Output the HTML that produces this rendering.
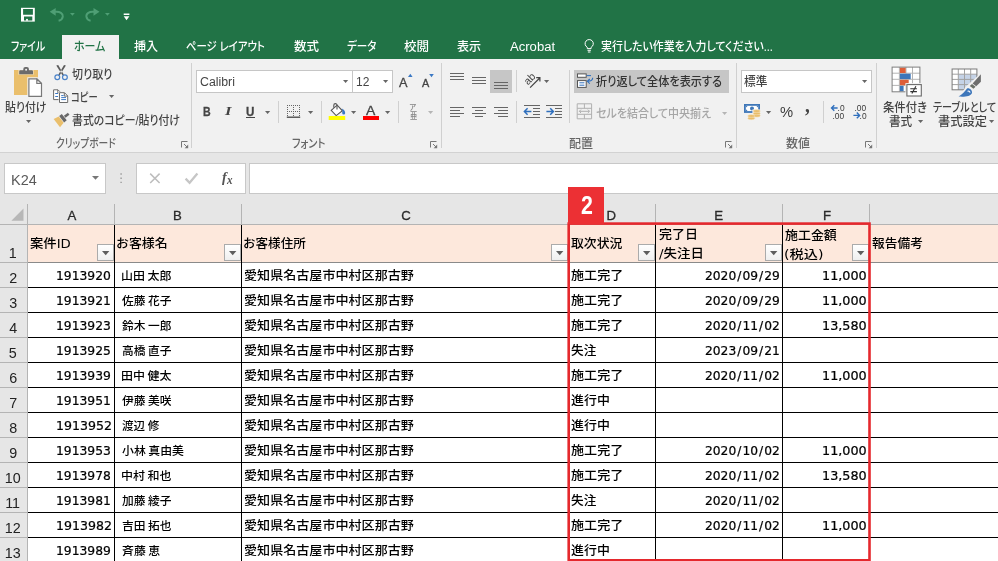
<!DOCTYPE html>
<html lang="ja">
<head>
<meta charset="utf-8">
<title>Excel</title>
<style>
html,body{margin:0;padding:0}
body{width:998px;height:561px;overflow:hidden;position:relative;background:#e6e6e6;
 font-family:"Liberation Sans","Noto Sans CJK JP",sans-serif;font-size:12px;color:#444}
div,span,svg,i,b,u{position:absolute;box-sizing:border-box}
.sec{left:0;top:0;width:998px}
.t{display:block;white-space:nowrap;line-height:20px;height:20px;transform-origin:0 0;
 font-feature-settings:"palt";font-style:normal;font-weight:400}
.t i{position:static;font-style:normal}
.ui{font-family:"Liberation Sans","Noto Sans CJK JP",sans-serif;font-weight:500}
.num{font-family:"DejaVu Sans","Liberation Sans","Noto Sans CJK JP",sans-serif}
.ser{font-family:"Liberation Serif","Noto Serif CJK SC",serif}
.cell{font-feature-settings:normal}
.m{font-weight:500}
.sb{-webkit-text-stroke:.3px currentColor}
.ns{-webkit-text-stroke:.22px currentColor}
.b{font-weight:700}.it{font-style:italic}
svg{overflow:visible}
.sec{will-change:transform}
</style>
</head>
<body>
<header id="titlebar" class="sec" style="position:absolute">
<div style="left:0px;top:0px;width:998px;height:59px;background:#217346;">
</div>
<svg style="left:21px;top:7px" width="14" height="15" viewBox="21 7 14 15" >
<rect x="21" y="7.800" width="13.800" height="13.800" fill="#fff"/>
<path d="M23.100 9h9.800v5.700h-9.800zM24 16.500h8.300v4.100h-8.300z" fill="#217346"/>
<rect x="26.100" y="18.900" width="1.800" height="1.900" fill="#fff"/>
</svg>
<svg style="left:49px;top:8px" width="15" height="14" viewBox="49 8 15 14" >
<path d="M49.700 11.800l6-3.900v7.800z" fill="#4f9f75"/>
<path d="M55 11.800c5-.600 8.200 1.700 7.800 4.900-.300 2.200-1.800 3.600-4.200 4.100" fill="none" stroke="#4f9f75" stroke-width="2"/>
</svg>
<svg style="left:70.4px;top:12.9px" width="4.8" height="2.7" viewBox="70.4 12.9 4.8 2.7" >
<path d="M70.4 12.9h4.8l-2.4 2.7z" fill="#4f9f75"/>
</svg>
<svg style="left:84px;top:8px" width="16" height="14" viewBox="84 8 16 14" >
<path d="M99.500 11.800l-6-3.900v7.800z" fill="#4f9f75"/>
<path d="M94.200 11.800c-5-.600-8.200 1.700-7.800 4.900.300 2.200 1.800 3.600 4.200 4.100" fill="none" stroke="#4f9f75" stroke-width="2"/>
</svg>
<svg style="left:105px;top:12.9px" width="4.8" height="2.7" viewBox="105 12.9 4.8 2.7" >
<path d="M105 12.9h4.8l-2.4 2.7z" fill="#4f9f75"/>
</svg>
<svg style="left:123px;top:13px" width="7" height="8" viewBox="123 13 7 8" >
<path d="M123.700 13.600h5.700v1.400h-5.700zM123.700 16.200h5.700l-2.850 4z" fill="#fff"/>
</svg>
</header>
<nav id="tabs" class="sec" style="position:absolute">
<div style="left:62px;top:35px;width:57px;height:25px;background:#f1f1f1;">
</div>
<svg style="left:585px;top:39px" width="9" height="14" viewBox="585 39 9 14" >
<path d="M587.3 48.6v-1.3a4.1 4.1 0 1 1 3.8 0v1.3zM587.5 50.3h3.4M587.9 52h2.6" fill="none" stroke="#fff" stroke-width="1"/>
</svg>
<span class="t ui" style="left:10.5px;top:37.1px;font-size:12px;color:#fff;transform:scaleX(0.8214);">ファイル</span>
<span class="t ui" style="left:73.59px;top:37.1px;font-size:12px;color:#217346;transform:scaleX(0.9121);">ホーム</span>
<span class="t ui" style="left:133.7px;top:37.1px;font-size:12px;color:#fff;transform:scaleX(1.0042);">挿入</span>
<span class="t ui" style="left:186.4px;top:37.1px;font-size:12px;color:#fff;transform:scaleX(0.8648);">ページ レイアウト</span>
<span class="t ui" style="left:293.5px;top:37.1px;font-size:12px;color:#fff;transform:scaleX(1.0417);">数式</span>
<span class="t ui" style="left:346.7px;top:37.1px;font-size:12px;color:#fff;transform:scaleX(0.8758);">データ</span>
<span class="t ui" style="left:403.8px;top:37.1px;font-size:12px;color:#fff;transform:scaleX(1.0478);">校閲</span>
<span class="t ui" style="left:456.7px;top:37.1px;font-size:12px;color:#fff;transform:scaleX(1.0042);">表示</span>
<span class="t ui" style="left:510.0px;top:37.4px;font-size:12.5px;color:#fff;transform:scaleX(1.0465);">Acrobat</span>
<span class="t ui" style="left:601.0px;top:37.1px;font-size:12px;color:#fff;transform:scaleX(0.9096);">実行したい作業を入力してください...</span>
</nav>
<section id="ribbon" class="sec" style="position:absolute">
<div style="left:0px;top:59px;width:998px;height:93px;background:#f1f1f1;">
</div>
<div style="left:0px;top:152px;width:998px;height:1px;background:#d2d2d2;">
</div>
<div style="left:191px;top:63px;width:1px;height:85px;background:#d0d0d0;">
</div>
<div style="left:441px;top:63px;width:1px;height:85px;background:#d0d0d0;">
</div>
<div style="left:736px;top:63px;width:1px;height:85px;background:#d0d0d0;">
</div>
<div style="left:876px;top:63px;width:1px;height:85px;background:#d0d0d0;">
</div>
<svg style="left:180.5px;top:141px" width="8" height="8" viewBox="180.5 141 8 8" >
<path d="M181.0 147.5v-6h6" fill="none" stroke="#777" stroke-width="1"/>
<path d="M183.5 144l3.2 3.2" stroke="#777" stroke-width="1"/>
<path d="M187.7 144.6v3.6h-3.6z" fill="#777"/>
</svg>
<svg style="left:430px;top:141px" width="8" height="8" viewBox="430 141 8 8" >
<path d="M430.5 147.5v-6h6" fill="none" stroke="#777" stroke-width="1"/>
<path d="M433 144l3.2 3.2" stroke="#777" stroke-width="1"/>
<path d="M437.2 144.6v3.6h-3.6z" fill="#777"/>
</svg>
<svg style="left:725px;top:141px" width="8" height="8" viewBox="725 141 8 8" >
<path d="M725.5 147.5v-6h6" fill="none" stroke="#777" stroke-width="1"/>
<path d="M728 144l3.2 3.2" stroke="#777" stroke-width="1"/>
<path d="M732.2 144.6v3.6h-3.6z" fill="#777"/>
</svg>
<svg style="left:865px;top:141px" width="8" height="8" viewBox="865 141 8 8" >
<path d="M865.5 147.5v-6h6" fill="none" stroke="#777" stroke-width="1"/>
<path d="M868 144l3.2 3.2" stroke="#777" stroke-width="1"/>
<path d="M872.2 144.6v3.6h-3.6z" fill="#777"/>
</svg>
<svg style="left:14px;top:67px" width="29" height="31" viewBox="14 67 29 31" >
<rect x="14" y="70" width="24" height="25" fill="#eabf6c"/>
<path d="M18.300 70h15.400v4.700h-15.400z" fill="#f1f1f1" opacity=".55"/>
<path d="M23.300 70.200v-1.200a2 2 0 0 1 2-2h1.600a2 2 0 0 1 2 2v1.200h2.900a1.200 1.200 0 0 1 1.200 1.200v2.800h-13.800v-2.800a1.200 1.200 0 0 1 1.200-1.200z" fill="#6b6b6b"/>
<circle cx="26.100" cy="69.700" r="1" fill="#f1f1f1"/>
<path d="M27.300 77.300h10.300l5.400 5.400v15.300h-15.700z" fill="#f1f1f1"/>
<path d="M28.900 78.800h7.900l4.700 4.700v12.800h-12.600z" fill="#fff" stroke="#787878" stroke-width="1.200"/>
<path d="M36.800 78.800v4.700h4.700z" fill="#e4e4e4" stroke="#787878" stroke-width="1.200" stroke-linejoin="round"/>
</svg>
<svg style="left:26px;top:120.2px" width="5.2" height="3" viewBox="26 120.2 5.2 3" >
<path d="M26 120.2h5.2l-2.6 3z" fill="#666"/>
</svg>
<svg style="left:53px;top:65px" width="16" height="16" viewBox="53 65 16 16" >
<path d="M56.300 65.400l1.900-.300 5.700 9.600-1.300.800zM65.900 65.400l-1.900-.300-5.700 9.600 1.300.800z" fill="#5c5c5c"/>
<circle cx="57.300" cy="77.200" r="2.400" fill="none" stroke="#4a82c8" stroke-width="1.200"/>
<circle cx="64.900" cy="77.200" r="2.400" fill="none" stroke="#4a82c8" stroke-width="1.200"/>
</svg>
<svg style="left:53px;top:89px" width="16" height="15" viewBox="53 89 16 15" >
<path d="M53.600 89.800h4.400l2.600 2.600v7.200h-7z" fill="#fff" stroke="#6b6b6b" stroke-width="1"/>
<path d="M57.800 90v2.800h2.800" fill="none" stroke="#6b6b6b" stroke-width="1"/>
<path d="M55.200 93.500h2.800M55.200 96.500h2.800" stroke="#3b78c4" stroke-width="1"/>
<path d="M58.500 91.700h6.300l3.700 3.700v8.300h-10z" fill="#f1f1f1"/>
<path d="M59.500 92.700h5l3.200 3.200v6.600h-8.200z" fill="#fff" stroke="#6b6b6b" stroke-width="1"/>
<path d="M64.300 92.900v3.200h3.200" fill="none" stroke="#6b6b6b" stroke-width="1"/>
<path d="M61.200 95.600h2.400M61.200 97.600h4.800M61.200 99.600h4.800" stroke="#3b78c4" stroke-width="1"/>
</svg>
<svg style="left:109px;top:95px" width="5.2" height="3" viewBox="109 95 5.2 3" >
<path d="M109 95h5.2l-2.6 3z" fill="#666"/>
</svg>
<svg style="left:53px;top:112px" width="17" height="14" viewBox="53 112 17 14" >
<g transform="translate(63 118.200) rotate(-38)">
<rect x="2.200" y="-1.300" width="5" height="2.600" fill="#686868"/>
<rect x="-1.700" y="-4" width="3.300" height="8" fill="#686868"/>
<path d="M-2.300-4v8l-5.600 1.300v-10.400z" fill="#eabf6c"/>
</g>
</svg>
<div style="left:196px;top:70px;width:157px;height:23px;background:#fff;border:1px solid #c6c6c6;">
</div>
<div style="left:352px;top:70px;width:41px;height:23px;background:#fff;border:1px solid #c6c6c6;">
</div>
<svg style="left:343px;top:80px" width="5.2" height="3" viewBox="343 80 5.2 3" >
<path d="M343 80h5.2l-2.6 3z" fill="#666"/>
</svg>
<svg style="left:382.7px;top:80px" width="5.2" height="3" viewBox="382.7 80 5.2 3" >
<path d="M382.7 80h5.2l-2.6 3z" fill="#666"/>
</svg>
<svg style="left:408px;top:73px" width="5" height="4" viewBox="408 73 5 4" >
<path d="M408 77h4.600l-2.300-3.200z" fill="#3b78c4"/>
</svg>
<svg style="left:429px;top:73px" width="5" height="4" viewBox="429 73 5 4" >
<path d="M429.200 74h4.600l-2.300 3.200z" fill="#3b78c4"/>
</svg>
<div style="left:246px;top:117px;width:9px;height:1px;background:#444;">
</div>
<svg style="left:264.6px;top:111px" width="5.2" height="3" viewBox="264.6 111 5.2 3" >
<path d="M264.6 111h5.2l-2.6 3z" fill="#666"/>
</svg>
<div style="left:278px;top:101px;width:1px;height:22px;background:#d0d0d0;">
</div>
<svg style="left:286px;top:104px" width="15" height="14" viewBox="286 104 15 14" >
<path d="M287.500 105v11.500M293.500 105v11.500M299.500 105v11.500" stroke="#666" stroke-width="1" stroke-dasharray="1 1"/>
<path d="M287 105.500h13M287 111.500h13" stroke="#666" stroke-width="1" stroke-dasharray="1 1"/>
<path d="M286.800 117.200h13.400" stroke="#444" stroke-width="1.300"/>
</svg>
<svg style="left:307.8px;top:111px" width="5.2" height="3" viewBox="307.8 111 5.2 3" >
<path d="M307.8 111h5.2l-2.6 3z" fill="#666"/>
</svg>
<div style="left:321px;top:101px;width:1px;height:22px;background:#d0d0d0;">
</div>
<svg style="left:328px;top:103px" width="18" height="17" viewBox="328 103 18 17" >
<path d="M331.200 110.400l6-5.200 5.200 5.600-6.200 4.800z" fill="#fff" stroke="#555" stroke-width="1.100"/>
<path d="M337 109.400v-4.200a1.600 1.600 0 0 0-3.200 0v2.600" fill="none" stroke="#555" stroke-width="1.100"/>
<path d="M341.800 108.600c1.800.800 3.400 2.600 3.400 4.400a1.500 1.500 0 0 1-3 0c0-1.300.500-2.700-.400-4.400z" fill="#3b78c4"/>
<rect x="328.700" y="116" width="16.500" height="4" fill="#ffff00"/>
</svg>
<svg style="left:350.8px;top:111px" width="5.2" height="3" viewBox="350.8 111 5.2 3" >
<path d="M350.8 111h5.2l-2.6 3z" fill="#666"/>
</svg>
<div style="left:363px;top:116px;width:16px;height:4px;background:#ff0000;">
</div>
<svg style="left:384.7px;top:111px" width="5.2" height="3" viewBox="384.7 111 5.2 3" >
<path d="M384.7 111h5.2l-2.6 3z" fill="#666"/>
</svg>
<div style="left:398px;top:101px;width:1px;height:22px;background:#d0d0d0;">
</div>
<svg style="left:427.6px;top:111px" width="5.2" height="3" viewBox="427.6 111 5.2 3" >
<path d="M427.6 111h5.2l-2.6 3z" fill="#b5b5b5"/>
</svg>
<svg style="left:450px;top:73px" width="14" height="7" viewBox="450 73 14 7" >
<path d="M450 73.5h14M450 76.5h14M450 79.5h14" stroke="#666" stroke-width="1" fill="none"/>
</svg>
<svg style="left:472px;top:77px" width="14" height="7" viewBox="472 77 14 7" >
<path d="M472 77.5h14M472 80.5h14M472 83.5h14" stroke="#666" stroke-width="1" fill="none"/>
</svg>
<div style="left:490px;top:70px;width:22px;height:23px;background:#c6c6c6;">
</div>
<svg style="left:494px;top:82px" width="14" height="7" viewBox="494 82 14 7" >
<path d="M494 82.5h14M494 85.5h14M494 88.5h14" stroke="#666" stroke-width="1" fill="none"/>
</svg>
<div style="left:516px;top:70px;width:1px;height:22px;background:#d0d0d0;">
</div>
<svg style="left:523px;top:72px" width="18" height="16" viewBox="523 72 18 16" >
<text transform="translate(527.900 85.500) rotate(-45)" font-family='"Liberation Sans",sans-serif' font-size="10.600" fill="#444">ab</text>
<path d="M530.100 87.600l9.600-9.600M536.200 77.700h3.700v3.700" stroke="#444" stroke-width="1.200" fill="none"/>
</svg>
<svg style="left:543.8px;top:80px" width="5.2" height="3" viewBox="543.8 80 5.2 3" >
<path d="M543.8 80h5.2l-2.6 3z" fill="#666"/>
</svg>
<svg style="left:450px;top:107px" width="14" height="10" viewBox="450 107 14 10" >
<path d="M450 107.5h14M450 110.5h10M450 113.5h14M450 116.5h10" stroke="#666" stroke-width="1" fill="none"/>
</svg>
<svg style="left:472px;top:107px" width="14" height="10" viewBox="472 107 14 10" >
<path d="M472.0 107.5h14M475.0 110.5h8M472.0 113.5h14M475.0 116.5h8" stroke="#666" stroke-width="1" fill="none"/>
</svg>
<svg style="left:494px;top:107px" width="14" height="10" viewBox="494 107 14 10" >
<path d="M494 107.5h14M498 110.5h10M494 113.5h14M498 116.5h10" stroke="#666" stroke-width="1" fill="none"/>
</svg>
<div style="left:516px;top:101px;width:1px;height:22px;background:#d0d0d0;">
</div>
<svg style="left:524px;top:105px" width="16" height="13" viewBox="524 105 16 13" >
<path d="M524 105.5h16M524 117.5h16" stroke="#666" stroke-width="1" fill="none"/>
<path d="M533 108.5h7M533 111.5h7M533 114.5h7" stroke="#666" stroke-width="1" fill="none"/>
<path d="M524.400 111.500h7M527.600 108.300l-3.200 3.200 3.200 3.200" stroke="#2f6fbd" stroke-width="1.500" fill="none"/>
</svg>
<svg style="left:546px;top:105px" width="16" height="13" viewBox="546 105 16 13" >
<path d="M546 105.5h16M546 117.5h16" stroke="#666" stroke-width="1" fill="none"/>
<path d="M555 108.5h7M555 111.5h7M555 114.5h7" stroke="#666" stroke-width="1" fill="none"/>
<path d="M546.400 111.500h7M550.200 108.300l3.200 3.200-3.200 3.200" stroke="#2f6fbd" stroke-width="1.500" fill="none"/>
</svg>
<div style="left:569px;top:70px;width:1px;height:53px;background:#d0d0d0;">
</div>
<div style="left:574px;top:70px;width:155px;height:23px;background:#c6c6c6;">
</div>
<svg style="left:576px;top:73px" width="18" height="16" viewBox="576 73 18 16" >
<rect x="577.500" y="73.900" width="8.700" height="3.400" fill="#fff" stroke="#555" stroke-width="1"/>
<path d="M586.600 75.600h4.400" stroke="#2f6fbd" stroke-width="1"/>
<rect x="577.500" y="80.600" width="8.700" height="6.800" fill="#fff" stroke="#555" stroke-width="1"/>
<path d="M579.400 82.800h5M579.400 85.200h5" stroke="#2f6fbd" stroke-width="1"/>
<path d="M592.700 77.800c0 2.400-1.600 3.500-5 3.500M589.800 79l-2.500 2.300 2.500 2.300" fill="none" stroke="#2f6fbd" stroke-width="1.100"/>
</svg>
<svg style="left:576px;top:103px" width="17" height="17" viewBox="576 103 17 17" >
<path d="M577.200 103.800h14.400v15h-14.400zM577.200 108.300h14.400M577.200 114.300h14.400M584.400 103.800v4.500M584.400 114.300v4.500" fill="none" stroke="#b0b0b0" stroke-width="1"/>
<path d="M579.300 111.300h10.200M581 109.600l-1.700 1.700 1.700 1.700M587.800 109.600l1.700 1.700-1.700 1.700" fill="none" stroke="#b0b0b0" stroke-width="1"/>
</svg>
<svg style="left:722px;top:111.6px" width="5.2" height="3" viewBox="722 111.6 5.2 3" >
<path d="M722 111.6h5.2l-2.6 3z" fill="#b5b5b5"/>
</svg>
<div style="left:741px;top:70px;width:131px;height:23px;background:#fff;border:1px solid #c6c6c6;">
</div>
<svg style="left:862px;top:80.2px" width="5.2" height="3" viewBox="862 80.2 5.2 3" >
<path d="M862 80.2h5.2l-2.6 3z" fill="#666"/>
</svg>
<svg style="left:744px;top:104px" width="17" height="16" viewBox="744 104 17 16" >
<rect x="744.900" y="104.900" width="14.200" height="7.100" fill="#fff" stroke="#3f77b8" stroke-width="1.800"/>
<path d="M746 106l1.600 0-1.600 1.600zM758 106l-1.600 0 1.600 1.600zM746 110.900l1.600 0-1.600-1.600z" fill="#3f77b8"/>
<circle cx="752" cy="108.400" r="2" fill="#3f77b8"/>
<path d="M752.400 109.400h8.400v8h-4.800v3h-9.200v-5.600h5.600z" fill="#f1f1f1"/>
<ellipse cx="756.700" cy="115.7" rx="3.500" ry="1.350" fill="#e9bd6a" stroke="#f4dcae" stroke-width=".600"/>
<ellipse cx="756.700" cy="113.4" rx="3.500" ry="1.350" fill="#e9bd6a" stroke="#f4dcae" stroke-width=".600"/>
<ellipse cx="756.700" cy="111.1" rx="3.500" ry="1.350" fill="#e9bd6a" stroke="#f4dcae" stroke-width=".600"/>
<ellipse cx="751.300" cy="118.3" rx="3.500" ry="1.350" fill="#e9bd6a" stroke="#f4dcae" stroke-width=".600"/>
<ellipse cx="751.300" cy="116" rx="3.500" ry="1.350" fill="#e9bd6a" stroke="#f4dcae" stroke-width=".600"/>
</svg>
<svg style="left:766px;top:111.2px" width="5.2" height="3" viewBox="766 111.2 5.2 3" >
<path d="M766 111.2h5.2l-2.6 3z" fill="#666"/>
</svg>
<div style="left:823px;top:101px;width:1px;height:22px;background:#d0d0d0;">
</div>
<svg style="left:831px;top:104px" width="15" height="15" viewBox="831 104 15 15" >
<path d="M831.400 108h6.200M834.300 105.200l-2.800 2.800 2.800 2.800" fill="none" stroke="#2f6fbd" stroke-width="1.400"/>
<text x="837.600" y="111" font-family='"Liberation Sans",sans-serif' font-size="8.400" fill="#3a3a3a">.0</text>
<text x="832.400" y="118.600" font-family='"Liberation Sans",sans-serif' font-size="8.400" fill="#3a3a3a">.00</text>
</svg>
<svg style="left:853px;top:104px" width="15" height="15" viewBox="853 104 15 15" >
<path d="M853.400 115.400h6.200M856.800 112.600l2.800 2.800-2.800 2.800" fill="none" stroke="#2f6fbd" stroke-width="1.400"/>
<text x="854.400" y="111" font-family='"Liberation Sans",sans-serif' font-size="8.400" fill="#3a3a3a">.00</text>
<text x="859.600" y="118.600" font-family='"Liberation Sans",sans-serif' font-size="8.400" fill="#3a3a3a">.0</text>
</svg>
<svg style="left:892px;top:67px" width="31" height="30" viewBox="892 67 31 30" >
<rect x="892.100" y="67.100" width="27.800" height="24.700" fill="#fff"/>
<path d="M899.4 67.100v24.700M906 67.100v24.700M912.5 67.100v24.700M892.100 73.2h27.800M892.100 79.3h27.800M892.100 85.4h27.800" stroke="#b4b4b4" stroke-width="1" fill="none"/>
<rect x="899.900" y="67.600" width="5.800" height="5.400" fill="#de5e38"/>
<rect x="899.900" y="73.700" width="10.800" height="5.400" fill="#3d76ba"/>
<rect x="899.900" y="79.800" width="8.800" height="5.400" fill="#de5e38"/>
<rect x="899.900" y="85.900" width="3.700" height="5.400" fill="#3d76ba"/>
<rect x="892.100" y="67.100" width="27.800" height="24.700" fill="none" stroke="#7e7e7e" stroke-width="1"/>
<rect x="905.400" y="83.100" width="17.500" height="14.400" fill="#f1f1f1"/>
<rect x="906.900" y="84.600" width="14.400" height="11.400" fill="#fff" stroke="#6a6a6a" stroke-width="1.100"/>
<path d="M910.300 88.800h6.600M910.300 91.600h6.600M915.900 86.200l-4 7.400" stroke="#333" stroke-width="1.100" fill="none"/>
</svg>
<svg style="left:917.5px;top:120.4px" width="5.2" height="3" viewBox="917.5 120.4 5.2 3" >
<path d="M917.5 120.4h5.2l-2.6 3z" fill="#666"/>
</svg>
<svg style="left:952px;top:69px" width="30" height="28" viewBox="952 69 30 28" >
<rect x="952.100" y="69" width="24.800" height="20.800" fill="#fff"/>
<rect x="958.300" y="74.200" width="18.600" height="15.600" fill="#c5d3e7"/>
<path d="M958.3 69v20.800M964.5 69v20.800M970.7 69v20.800M952.100 74.2h24.800M952.100 79.4h24.800M952.100 84.6h24.800" stroke="#a2a2a2" stroke-width="1" fill="none"/>
<rect x="952.100" y="69" width="24.800" height="20.800" fill="none" stroke="#7a7a7a" stroke-width="1"/>
<path d="M982 72.200v11l-3.800 3.600v4.200h-4.600c-.600 4-5.600 7.100-16.600 6.900l-1-1.600c5-2.500 7.500-5.500 9.600-9.600z" fill="#f1f1f1"/>
<path d="M980.900 74.300v7.500l-4.700 4.400-3.600-2.800z" fill="#6e6e6e"/>
<path d="M972 84l3.600 2.800-2.200 2-3.600-2.800z" fill="#6b7068"/>
<path d="M958.600 96.600c4.400-2.600 6.400-5.400 8.400-8 2-1.100 5.500 1.400 5 4.400-1.500 3.500-7 4-13.400 3.600z" fill="#3d76ba"/>
<path d="M967 91.200a1.900 1.900 0 0 1 3.300 1.800c-.700-.200-1-.900-1.500-1.300-.500-.400-1.200-.300-1.800-.500z" fill="#fff"/>
</svg>
<svg style="left:989.3px;top:120.4px" width="5.2" height="3" viewBox="989.3 120.4 5.2 3" >
<path d="M989.3 120.4h5.2l-2.6 3z" fill="#666"/>
</svg>
<span class="t ui" style="left:56.19px;top:133.7px;font-size:12px;color:#666;transform:scaleX(0.8082);">クリップボード</span>
<span class="t ui" style="left:292.0px;top:133.7px;font-size:12px;color:#666;transform:scaleX(0.8462);">フォント</span>
<span class="t ui" style="left:569.0px;top:133.7px;font-size:12px;color:#666;">配置</span>
<span class="t ui" style="left:786.0px;top:133.7px;font-size:12px;color:#666;">数値</span>
<span class="t ui" style="left:5.0px;top:97.8px;font-size:12px;color:#444;transform:scaleX(0.9087);">貼り付け</span>
<span class="t ui" style="left:72.0px;top:65.1px;font-size:12px;color:#444;transform:scaleX(0.9209);">切り取り</span>
<span class="t ui" style="left:71.22px;top:87.7px;font-size:12px;color:#444;transform:scaleX(0.7758);">コピー</span>
<span class="t ui" style="left:72.0px;top:110.7px;font-size:12px;color:#444;transform:scaleX(0.9076);">書式のコピー/貼り付け</span>
<span class="t ui" style="left:199.5px;top:72.1px;font-size:12.5px;color:#444;transform:scaleX(0.9857);">Calibri</span>
<span class="t ui" style="left:356.0px;top:72.2px;font-size:12px;color:#444;">12</span>
<span class="t ui sb" style="left:399.4px;top:72.9px;font-size:12.2px;color:#444;transform:scaleX(1.0444);">A</span>
<span class="t ui sb" style="left:422.0px;top:74.1px;font-size:10px;color:#444;transform:scaleX(1.0857);">A</span>
<span class="t ui b sb" style="left:202.6px;top:101.9px;font-size:12.4px;color:#444;transform:scaleX(0.8556);">B</span>
<span class="t ser b it" style="left:225.2px;top:101.4px;font-size:12.6px;color:#444;transform:scaleX(1.3200);">I</span>
<span class="t ui b sb" style="left:246.2px;top:101.9px;font-size:12.4px;color:#444;transform:scaleX(0.9333);">U</span>
<span class="t ui sb" style="left:366.4px;top:101.3px;font-size:12.8px;color:#444;transform:scaleX(1.0889);">A</span>
<span class="t ui cell" style="left:409.07px;top:98.0px;font-size:8px;color:#858585;transform:scaleX(0.9286);">ア</span>
<span class="t ui cell" style="left:410.0px;top:106.4px;font-size:9.2px;color:#858585;transform:scaleX(0.7889);">亜</span>
<span class="t ui" style="left:596.0px;top:71.7px;font-size:12px;color:#333;transform:scaleX(0.9304);">折り返して全体を表示する</span>
<span class="t ui" style="left:596.0px;top:103.7px;font-size:12px;color:#a6a6a6;transform:scaleX(0.9167);">セルを結合して中央揃え</span>
<span class="t ui" style="left:744.4px;top:72.1px;font-size:12px;color:#444;transform:scaleX(0.9708);">標準</span>
<span class="t ui" style="left:780.4px;top:102.3px;font-size:15px;color:#3c3c3c;transform:scaleX(0.9846);">%</span>
<span class="t ser b" style="left:805.3px;top:94.8px;font-size:22px;color:#444;transform:scaleX(0.8800);">,</span>
<span class="t ui" style="left:883.0px;top:97.6px;font-size:12px;color:#444;transform:scaleX(0.9457);">条件付き</span>
<span class="t ui" style="left:889.0px;top:112.4px;font-size:12px;color:#444;transform:scaleX(0.9667);">書式</span>
<span class="t ui" style="left:933.0px;top:97.6px;font-size:12px;color:#444;transform:scaleX(0.8400);">テーブルとして</span>
<span class="t ui" style="left:937.6px;top:112.4px;font-size:12px;color:#444;transform:scaleX(1.0208);">書式設定</span>
</section>
<section id="formulabar" class="sec" style="position:absolute">
<div style="left:4px;top:163px;width:102px;height:31px;background:#fff;border:1px solid #c8c8c8;">
</div>
<svg style="left:92px;top:176.3px" width="7" height="3.8" viewBox="92 176.3 7 3.8" >
<path d="M92 176.3h7l-3.5 3.8z" fill="#777"/>
</svg>
<svg style="left:120px;top:173px" width="2" height="11" viewBox="120 173 2 11" >
<path d="M120.400 173.300h1.400v1.400h-1.400zM120.400 177.500h1.400v1.400h-1.400zM120.400 181.700h1.400v1.400h-1.400z" fill="#9a9a9a"/>
</svg>
<div style="left:136px;top:163px;width:110px;height:31px;background:#fff;border:1px solid #c8c8c8;">
</div>
<svg style="left:149px;top:173px" width="12" height="11" viewBox="149 173 12 11" >
<path d="M150.200 173.600l9.400 9.400M159.600 173.600l-9.400 9.400" stroke="#bdbdbd" stroke-width="1.500"/>
</svg>
<svg style="left:185px;top:173px" width="14" height="11" viewBox="185 173 14 11" >
<path d="M185.600 178.600l4 4.200 7.800-9.200" fill="none" stroke="#c6c6c6" stroke-width="2.300"/>
</svg>
<div style="left:249px;top:163px;width:760px;height:31px;background:#fff;border:1px solid #c8c8c8;">
</div>
<span class="t ui" style="left:11.01px;top:170.4px;font-size:14.6px;color:#5a5a5a;transform:scaleX(0.9920);">K24</span>
<span class="t ser b it" style="left:221.6px;top:166.5px;font-size:15px;color:#555;transform:scaleX(0.9429);">f</span>
<span class="t ser b it" style="left:227.2px;top:169.6px;font-size:11.5px;color:#555;transform:scaleX(0.9667);">x</span>
</section>
<main id="grid" class="sec" style="position:absolute">
<div style="left:0px;top:204px;width:998px;height:21px;background:#e6e6e6;">
</div>
<div style="left:0px;top:224px;width:998px;height:1px;background:#b4b4b4;">
</div>
<div style="left:27px;top:204px;width:1px;height:21px;background:#b4b4b4;">
</div>
<div style="left:114px;top:204px;width:1px;height:21px;background:#b4b4b4;">
</div>
<div style="left:241px;top:204px;width:1px;height:21px;background:#b4b4b4;">
</div>
<div style="left:568px;top:204px;width:1px;height:21px;background:#b4b4b4;">
</div>
<div style="left:655px;top:204px;width:1px;height:21px;background:#b4b4b4;">
</div>
<div style="left:782px;top:204px;width:1px;height:21px;background:#b4b4b4;">
</div>
<div style="left:869px;top:204px;width:1px;height:21px;background:#b4b4b4;">
</div>
<svg style="left:11px;top:208px" width="13" height="13" viewBox="11 208 13 13" >
<path d="M23.500 208.600v12.100h-12.100z" fill="#b7b7b7"/>
</svg>
<div style="left:0px;top:225px;width:27px;height:336px;background:#e6e6e6;">
</div>
<div style="left:27px;top:225px;width:1px;height:336px;background:#b4b4b4;">
</div>
<div style="left:0px;top:262px;width:27px;height:1px;background:#b4b4b4;">
</div>
<div style="left:0px;top:287px;width:27px;height:1px;background:#b4b4b4;">
</div>
<div style="left:0px;top:312px;width:27px;height:1px;background:#b4b4b4;">
</div>
<div style="left:0px;top:337px;width:27px;height:1px;background:#b4b4b4;">
</div>
<div style="left:0px;top:362px;width:27px;height:1px;background:#b4b4b4;">
</div>
<div style="left:0px;top:387px;width:27px;height:1px;background:#b4b4b4;">
</div>
<div style="left:0px;top:412px;width:27px;height:1px;background:#b4b4b4;">
</div>
<div style="left:0px;top:437px;width:27px;height:1px;background:#b4b4b4;">
</div>
<div style="left:0px;top:462px;width:27px;height:1px;background:#b4b4b4;">
</div>
<div style="left:0px;top:487px;width:27px;height:1px;background:#b4b4b4;">
</div>
<div style="left:0px;top:512px;width:27px;height:1px;background:#b4b4b4;">
</div>
<div style="left:0px;top:537px;width:27px;height:1px;background:#b4b4b4;">
</div>
<div style="left:0px;top:562px;width:27px;height:1px;background:#b4b4b4;">
</div>
<div style="left:28px;top:225px;width:970px;height:336px;background:#fff;">
</div>
<div style="left:28px;top:225px;width:970px;height:37px;background:#fde8dc;">
</div>
<div style="left:28px;top:262px;width:970px;height:1px;background:#8a8a8a;">
</div>
<div style="left:28px;top:287px;width:970px;height:1px;background:#000;">
</div>
<div style="left:28px;top:312px;width:970px;height:1px;background:#000;">
</div>
<div style="left:28px;top:337px;width:970px;height:1px;background:#000;">
</div>
<div style="left:28px;top:362px;width:970px;height:1px;background:#000;">
</div>
<div style="left:28px;top:387px;width:970px;height:1px;background:#000;">
</div>
<div style="left:28px;top:412px;width:970px;height:1px;background:#000;">
</div>
<div style="left:28px;top:437px;width:970px;height:1px;background:#000;">
</div>
<div style="left:28px;top:462px;width:970px;height:1px;background:#000;">
</div>
<div style="left:28px;top:487px;width:970px;height:1px;background:#000;">
</div>
<div style="left:28px;top:512px;width:970px;height:1px;background:#000;">
</div>
<div style="left:28px;top:537px;width:970px;height:1px;background:#000;">
</div>
<div style="left:28px;top:562px;width:970px;height:1px;background:#000;">
</div>
<div style="left:114px;top:225px;width:1px;height:336px;background:#000;">
</div>
<div style="left:241px;top:225px;width:1px;height:336px;background:#000;">
</div>
<div style="left:568px;top:225px;width:1px;height:336px;background:#000;">
</div>
<div style="left:655px;top:225px;width:1px;height:336px;background:#000;">
</div>
<div style="left:782px;top:225px;width:1px;height:336px;background:#000;">
</div>
<div style="left:869px;top:225px;width:1px;height:336px;background:#000;">
</div>
<div class="fb" style="left:97px;top:244px;width:17px;height:17px;border:1px solid #ababab;background:linear-gradient(#fff,#efefef)">
</div>
<svg style="left:102px;top:251px" width="8" height="4" viewBox="102 251 8 4" >
<path d="M102 251h7.400l-3.700 4.200z" fill="#5e5e5e"/>
</svg>
<div class="fb" style="left:224px;top:244px;width:17px;height:17px;border:1px solid #ababab;background:linear-gradient(#fff,#efefef)">
</div>
<svg style="left:229px;top:251px" width="8" height="4" viewBox="229 251 8 4" >
<path d="M229 251h7.400l-3.700 4.200z" fill="#5e5e5e"/>
</svg>
<div class="fb" style="left:551px;top:244px;width:17px;height:17px;border:1px solid #ababab;background:linear-gradient(#fff,#efefef)">
</div>
<svg style="left:556px;top:251px" width="8" height="4" viewBox="556 251 8 4" >
<path d="M556 251h7.400l-3.700 4.200z" fill="#5e5e5e"/>
</svg>
<div class="fb" style="left:638px;top:244px;width:17px;height:17px;border:1px solid #ababab;background:linear-gradient(#fff,#efefef)">
</div>
<svg style="left:643px;top:251px" width="8" height="4" viewBox="643 251 8 4" >
<path d="M643 251h7.400l-3.700 4.200z" fill="#5e5e5e"/>
</svg>
<div class="fb" style="left:765px;top:244px;width:17px;height:17px;border:1px solid #ababab;background:linear-gradient(#fff,#efefef)">
</div>
<svg style="left:770px;top:251px" width="8" height="4" viewBox="770 251 8 4" >
<path d="M770 251h7.400l-3.700 4.200z" fill="#5e5e5e"/>
</svg>
<div class="fb" style="left:852px;top:244px;width:17px;height:17px;border:1px solid #ababab;background:linear-gradient(#fff,#efefef)">
</div>
<svg style="left:857px;top:251px" width="8" height="4" viewBox="857 251 8 4" >
<path d="M857 251h7.400l-3.700 4.200z" fill="#5e5e5e"/>
</svg>
<span class="t ui sb" style="left:67.5px;top:205.5px;font-size:13.2px;color:#2a2a2a;">A</span>
<span class="t ui sb" style="left:173.0px;top:205.5px;font-size:13.2px;color:#2a2a2a;">B</span>
<span class="t ui sb" style="left:401.3px;top:205.5px;font-size:13.2px;color:#2a2a2a;">C</span>
<span class="t ui sb" style="left:606.5px;top:205.5px;font-size:13.2px;color:#2a2a2a;">D</span>
<span class="t ui sb" style="left:714.2px;top:205.5px;font-size:13.2px;color:#2a2a2a;">E</span>
<span class="t ui sb" style="left:823.0px;top:205.5px;font-size:13.2px;color:#2a2a2a;">F</span>
<span class="t ui" style="left:8.7px;top:243.0px;font-size:14.3px;color:#222;">1</span>
<span class="t ui" style="left:9.2px;top:268.0px;font-size:14.3px;color:#222;">2</span>
<span class="t ui" style="left:9.2px;top:293.0px;font-size:14.3px;color:#222;">3</span>
<span class="t ui" style="left:9.2px;top:318.0px;font-size:14.3px;color:#222;">4</span>
<span class="t ui" style="left:8.7px;top:343.0px;font-size:14.3px;color:#222;">5</span>
<span class="t ui" style="left:9.2px;top:368.0px;font-size:14.3px;color:#222;">6</span>
<span class="t ui" style="left:9.2px;top:393.0px;font-size:14.3px;color:#222;">7</span>
<span class="t ui" style="left:9.2px;top:418.0px;font-size:14.3px;color:#222;">8</span>
<span class="t ui" style="left:9.2px;top:443.0px;font-size:14.3px;color:#222;">9</span>
<span class="t ui" style="left:4.7px;top:468.0px;font-size:14.3px;color:#222;">10</span>
<span class="t ui" style="left:5.2px;top:493.0px;font-size:14.3px;color:#222;">11</span>
<span class="t ui" style="left:4.7px;top:518.0px;font-size:14.3px;color:#222;">12</span>
<span class="t ui" style="left:4.7px;top:543.0px;font-size:14.3px;color:#222;">13</span>
<span class="t num cell m" style="left:30.0px;top:233.8px;font-size:12.5px;color:#000;transform:scaleX(1.0658);">案件ID</span>
<span class="t num cell m" style="left:116.37px;top:233.8px;font-size:12.5px;color:#000;transform:scaleX(1.0333);">お客様名</span>
<span class="t num cell m" style="left:243.2px;top:233.8px;font-size:12.5px;color:#000;transform:scaleX(1.0048);">お客様住所</span>
<span class="t num cell m" style="left:571.3px;top:233.8px;font-size:12.5px;color:#000;transform:scaleX(1.0260);">取次状況</span>
<span class="t num cell m" style="left:658.6px;top:224.8px;font-size:12.5px;color:#000;transform:scaleX(1.0389);">完了日</span>
<span class="t num cell m" style="left:658.6px;top:244.2px;font-size:12.5px;color:#000;transform:scaleX(1.0775);">/失注日</span>
<span class="t num cell m" style="left:785.0px;top:225.5px;font-size:12.5px;color:#000;transform:scaleX(1.0360);">施工金額</span>
<span class="t num cell m" style="left:783.86px;top:244.7px;font-size:12.5px;color:#000;transform:scaleX(1.1364);">(税込)</span>
<span class="t num cell m" style="left:872.0px;top:234.0px;font-size:12.5px;color:#000;transform:scaleX(1.0200);">報告備考</span>
<span class="t num cell ns" style="left:56.46px;top:266.2px;font-size:11.9px;color:#000;transform:scaleX(1.0365);">1913920</span>
<span class="t num cell m" style="left:120.57px;top:266.4px;font-size:11.7px;color:#000;transform:scaleX(1.0250);">山田<i style="margin-right:-1.200px"> </i>太郎</span>
<span class="t num cell m" style="left:243.95px;top:266.2px;font-size:12.5px;color:#000;transform:scaleX(1.0453);">愛知県名古屋市中村区那古野</span>
<span class="t num cell m" style="left:571.3px;top:266.2px;font-size:12.5px;color:#000;transform:scaleX(1.0469);">施工完了</span>
<span class="t num cell ns" style="left:705.0px;top:266.2px;font-size:11.9px;color:#000;transform:scaleX(1.0306);">2020<i style="margin:0 1px">/</i>09<i style="margin:0 1px">/</i>29</span>
<span class="t num cell ns" style="left:822.12px;top:266.2px;font-size:11.9px;color:#000;transform:scaleX(1.0750);">11,000</span>
<span class="t num cell ns" style="left:56.46px;top:291.2px;font-size:11.9px;color:#000;transform:scaleX(1.0365);">1913921</span>
<span class="t num cell m" style="left:121.6px;top:291.4px;font-size:11.7px;color:#000;transform:scaleX(1.0041);">佐藤<i style="margin-right:-1.200px"> </i>花子</span>
<span class="t num cell m" style="left:243.95px;top:291.2px;font-size:12.5px;color:#000;transform:scaleX(1.0453);">愛知県名古屋市中村区那古野</span>
<span class="t num cell m" style="left:571.3px;top:291.2px;font-size:12.5px;color:#000;transform:scaleX(1.0469);">施工完了</span>
<span class="t num cell ns" style="left:705.0px;top:291.2px;font-size:11.9px;color:#000;transform:scaleX(1.0306);">2020<i style="margin:0 1px">/</i>09<i style="margin:0 1px">/</i>29</span>
<span class="t num cell ns" style="left:822.12px;top:291.2px;font-size:11.9px;color:#000;transform:scaleX(1.0750);">11,000</span>
<span class="t num cell ns" style="left:56.46px;top:316.2px;font-size:11.9px;color:#000;transform:scaleX(1.0365);">1913923</span>
<span class="t num cell m" style="left:121.6px;top:316.4px;font-size:11.7px;color:#000;transform:scaleX(1.0041);">鈴木<i style="margin-right:-1.200px"> </i>一郎</span>
<span class="t num cell m" style="left:243.95px;top:316.2px;font-size:12.5px;color:#000;transform:scaleX(1.0453);">愛知県名古屋市中村区那古野</span>
<span class="t num cell m" style="left:571.3px;top:316.2px;font-size:12.5px;color:#000;transform:scaleX(1.0469);">施工完了</span>
<span class="t num cell ns" style="left:705.0px;top:316.2px;font-size:11.9px;color:#000;transform:scaleX(1.0306);">2020<i style="margin:0 1px">/</i>11<i style="margin:0 1px">/</i>02</span>
<span class="t num cell ns" style="left:822.12px;top:316.2px;font-size:11.9px;color:#000;transform:scaleX(1.0750);">13,580</span>
<span class="t num cell ns" style="left:56.46px;top:341.2px;font-size:11.9px;color:#000;transform:scaleX(1.0365);">1913925</span>
<span class="t num cell m" style="left:121.6px;top:341.4px;font-size:11.7px;color:#000;transform:scaleX(1.0041);">高橋<i style="margin-right:-1.200px"> </i>直子</span>
<span class="t num cell m" style="left:243.95px;top:341.2px;font-size:12.5px;color:#000;transform:scaleX(1.0453);">愛知県名古屋市中村区那古野</span>
<span class="t num cell m" style="left:571.3px;top:341.2px;font-size:12.5px;color:#000;transform:scaleX(1.0120);">失注</span>
<span class="t num cell ns" style="left:705.0px;top:341.2px;font-size:11.9px;color:#000;transform:scaleX(1.0306);">2023<i style="margin:0 1px">/</i>09<i style="margin:0 1px">/</i>21</span>
<span class="t num cell ns" style="left:56.46px;top:366.2px;font-size:11.9px;color:#000;transform:scaleX(1.0365);">1913939</span>
<span class="t num cell m" style="left:120.57px;top:366.4px;font-size:11.7px;color:#000;transform:scaleX(1.0250);">田中<i style="margin-right:-1.200px"> </i>健太</span>
<span class="t num cell m" style="left:243.95px;top:366.2px;font-size:12.5px;color:#000;transform:scaleX(1.0453);">愛知県名古屋市中村区那古野</span>
<span class="t num cell m" style="left:571.3px;top:366.2px;font-size:12.5px;color:#000;transform:scaleX(1.0469);">施工完了</span>
<span class="t num cell ns" style="left:705.0px;top:366.2px;font-size:11.9px;color:#000;transform:scaleX(1.0306);">2020<i style="margin:0 1px">/</i>11<i style="margin:0 1px">/</i>02</span>
<span class="t num cell ns" style="left:822.12px;top:366.2px;font-size:11.9px;color:#000;transform:scaleX(1.0750);">11,000</span>
<span class="t num cell ns" style="left:56.46px;top:391.2px;font-size:11.9px;color:#000;transform:scaleX(1.0365);">1913951</span>
<span class="t num cell m" style="left:121.6px;top:391.4px;font-size:11.7px;color:#000;transform:scaleX(1.0041);">伊藤<i style="margin-right:-1.200px"> </i>美咲</span>
<span class="t num cell m" style="left:243.95px;top:391.2px;font-size:12.5px;color:#000;transform:scaleX(1.0453);">愛知県名古屋市中村区那古野</span>
<span class="t num cell m" style="left:571.3px;top:391.2px;font-size:12.5px;color:#000;transform:scaleX(1.0351);">進行中</span>
<span class="t num cell ns" style="left:56.44px;top:416.2px;font-size:11.9px;color:#000;transform:scaleX(1.0569);">1913952</span>
<span class="t num cell m" style="left:121.6px;top:416.4px;font-size:11.7px;color:#000;transform:scaleX(0.9895);">渡辺<i style="margin-right:-1.200px"> </i>修</span>
<span class="t num cell m" style="left:243.95px;top:416.2px;font-size:12.5px;color:#000;transform:scaleX(1.0453);">愛知県名古屋市中村区那古野</span>
<span class="t num cell m" style="left:571.3px;top:416.2px;font-size:12.5px;color:#000;transform:scaleX(1.0351);">進行中</span>
<span class="t num cell ns" style="left:56.46px;top:441.2px;font-size:11.9px;color:#000;transform:scaleX(1.0365);">1913953</span>
<span class="t num cell m" style="left:121.6px;top:441.4px;font-size:11.7px;color:#000;transform:scaleX(1.0164);">小林<i style="margin-right:-1.200px"> </i>真由美</span>
<span class="t num cell m" style="left:243.95px;top:441.2px;font-size:12.5px;color:#000;transform:scaleX(1.0453);">愛知県名古屋市中村区那古野</span>
<span class="t num cell m" style="left:571.3px;top:441.2px;font-size:12.5px;color:#000;transform:scaleX(1.0469);">施工完了</span>
<span class="t num cell ns" style="left:705.0px;top:441.2px;font-size:11.9px;color:#000;transform:scaleX(1.0306);">2020<i style="margin:0 1px">/</i>10<i style="margin:0 1px">/</i>02</span>
<span class="t num cell ns" style="left:822.12px;top:441.2px;font-size:11.9px;color:#000;transform:scaleX(1.0750);">11,000</span>
<span class="t num cell ns" style="left:56.46px;top:466.2px;font-size:11.9px;color:#000;transform:scaleX(1.0365);">1913978</span>
<span class="t num cell m" style="left:120.57px;top:466.4px;font-size:11.7px;color:#000;transform:scaleX(1.0250);">中村<i style="margin-right:-1.200px"> </i>和也</span>
<span class="t num cell m" style="left:243.95px;top:466.2px;font-size:12.5px;color:#000;transform:scaleX(1.0453);">愛知県名古屋市中村区那古野</span>
<span class="t num cell m" style="left:571.3px;top:466.2px;font-size:12.5px;color:#000;transform:scaleX(1.0469);">施工完了</span>
<span class="t num cell ns" style="left:705.0px;top:466.2px;font-size:11.9px;color:#000;transform:scaleX(1.0306);">2020<i style="margin:0 1px">/</i>11<i style="margin:0 1px">/</i>02</span>
<span class="t num cell ns" style="left:822.12px;top:466.2px;font-size:11.9px;color:#000;transform:scaleX(1.0750);">13,580</span>
<span class="t num cell ns" style="left:56.46px;top:491.2px;font-size:11.9px;color:#000;transform:scaleX(1.0365);">1913981</span>
<span class="t num cell m" style="left:121.6px;top:491.4px;font-size:11.7px;color:#000;transform:scaleX(1.0041);">加藤<i style="margin-right:-1.200px"> </i>綾子</span>
<span class="t num cell m" style="left:243.95px;top:491.2px;font-size:12.5px;color:#000;transform:scaleX(1.0453);">愛知県名古屋市中村区那古野</span>
<span class="t num cell m" style="left:571.3px;top:491.2px;font-size:12.5px;color:#000;transform:scaleX(1.0120);">失注</span>
<span class="t num cell ns" style="left:705.0px;top:491.2px;font-size:11.9px;color:#000;transform:scaleX(1.0306);">2020<i style="margin:0 1px">/</i>11<i style="margin:0 1px">/</i>02</span>
<span class="t num cell ns" style="left:56.44px;top:516.2px;font-size:11.9px;color:#000;transform:scaleX(1.0569);">1913982</span>
<span class="t num cell m" style="left:121.6px;top:516.4px;font-size:11.7px;color:#000;transform:scaleX(1.0041);">吉田<i style="margin-right:-1.200px"> </i>拓也</span>
<span class="t num cell m" style="left:243.95px;top:516.2px;font-size:12.5px;color:#000;transform:scaleX(1.0453);">愛知県名古屋市中村区那古野</span>
<span class="t num cell m" style="left:571.3px;top:516.2px;font-size:12.5px;color:#000;transform:scaleX(1.0469);">施工完了</span>
<span class="t num cell ns" style="left:705.0px;top:516.2px;font-size:11.9px;color:#000;transform:scaleX(1.0306);">2020<i style="margin:0 1px">/</i>11<i style="margin:0 1px">/</i>02</span>
<span class="t num cell ns" style="left:822.12px;top:516.2px;font-size:11.9px;color:#000;transform:scaleX(1.0750);">11,000</span>
<span class="t num cell ns" style="left:56.46px;top:541.2px;font-size:11.9px;color:#000;transform:scaleX(1.0365);">1913989</span>
<span class="t num cell m" style="left:121.6px;top:541.4px;font-size:11.7px;color:#000;transform:scaleX(1.0162);">斉藤<i style="margin-right:-1.200px"> </i>恵</span>
<span class="t num cell m" style="left:243.95px;top:541.2px;font-size:12.5px;color:#000;transform:scaleX(1.0453);">愛知県名古屋市中村区那古野</span>
<span class="t num cell m" style="left:571.3px;top:541.2px;font-size:12.5px;color:#000;transform:scaleX(1.0351);">進行中</span>
</main>
<aside id="annotation" class="sec" style="position:absolute">
<svg style="left:567px;top:222px" width="305" height="339" viewBox="567 222 305 339" >
<rect x="568.700" y="223.600" width="300.800" height="336.700" fill="none" stroke="#e5282d" stroke-width="2.600"/>
</svg>
<div style="left:568px;top:187px;width:36px;height:37px;background:#ec3034;">
</div>
<span class="t ui b" style="left:581.18px;top:195.0px;font-size:26.2px;color:#fff;transform:scaleX(0.8154);">2</span>
</aside>
</body>
</html>
